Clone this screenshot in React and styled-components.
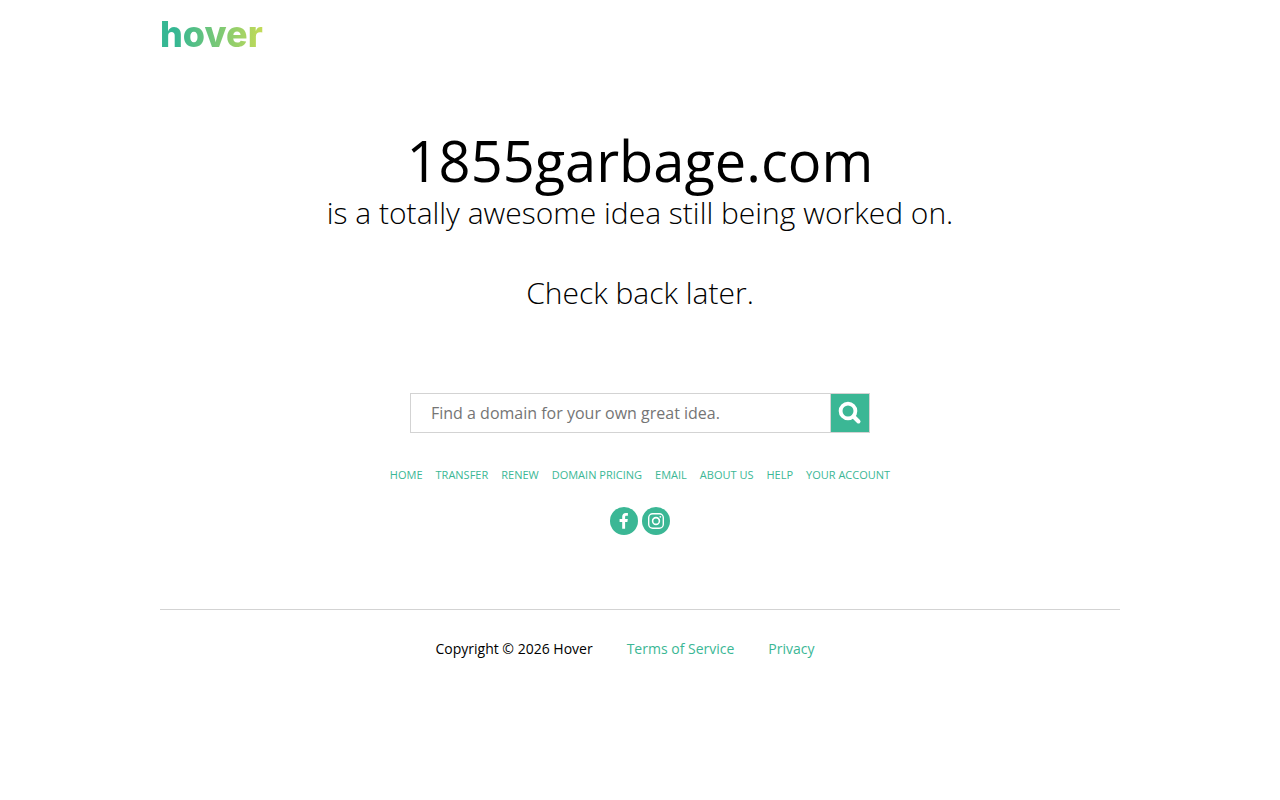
import styled, { createGlobalStyle } from "styled-components";

const GlobalStyle = createGlobalStyle`
  * {
    box-sizing: border-box;
  }

  body {
    margin: 0;
    background: #fff;
    color: #000;
    font-family: "Open Sans", sans-serif;
    font-size: 14px;
  }

  a {
    color: #3bb795;
    text-decoration: none;
  }
`;

const Container = styled.div`
  max-width: 960px;
  margin: 0 auto;
`;

const Header = styled.header`
  display: flex;
  padding-top: 10px;
`;

const Logo = styled.a`
  font-family: Inter, sans-serif;
  font-size: 36px;
  font-weight: 800;
  line-height: 48px;
  color: transparent;
  background: linear-gradient(90deg, #35b793 15%, #c4db57);
  background-clip: text;
`;

const Main = styled.main`
  display: flex;
  flex-direction: column;
  align-items: center;
  padding: 70px 0 74px;
  border-bottom: 1px solid #d3d3d3;
  text-align: center;
`;

const Title = styled.h1`
  margin: 0 0 1px;
  font-size: 56px;
  font-weight: 400;
  line-height: 64px;
`;

const Message = styled.p`
  margin: 0 0 40px;
  font-size: 30px;
  font-weight: 300;
  line-height: 40px;
`;

const SearchForm = styled.form`
  display: flex;
  width: 100%;
  max-width: 460px;
  height: 40px;
  margin: 40px 0 32px;
  border: 1px solid #d3d3d3;
`;

const SearchInput = styled.input`
  flex: 1;
  min-width: 0;
  padding: 0 20px;
  border: 0;
  border-right: 1px solid #d3d3d3;
  font-family: inherit;
  font-size: 16px;

  &::placeholder {
    color: #757575;
  }
`;

const SearchButton = styled.button`
  display: flex;
  align-items: center;
  justify-content: center;
  width: 38px;
  padding: 0;
  border: 0;
  background: #3bb795;
  cursor: pointer;
`;

const Nav = styled.nav`
  display: flex;
  flex-wrap: wrap;
  justify-content: center;
  gap: 0 13px;
  font-size: 11px;
  line-height: 20px;
  text-transform: uppercase;
`;

const Social = styled.div`
  display: flex;
  gap: 4px;
  margin-top: 22px;
`;

const SocialLink = styled.a`
  display: flex;
  width: 28px;
  height: 28px;
  border-radius: 50%;
  background: #3bb795;
`;

const Footer = styled.footer`
  display: flex;
  justify-content: center;
  gap: 34px;
  padding: 29px 30px 29px 0;
  line-height: 20px;
`;

const links = [
  "Home",
  "Transfer",
  "Renew",
  "Domain Pricing",
  "Email",
  "About Us",
  "Help",
  "Your Account",
];

function SearchIcon() {
  return (
    <svg width="24" height="24" viewBox="0 0 24 24" fill="none" stroke="#fff">
      <circle cx="10" cy="10" r="7.4" strokeWidth="3.8" />
      <path d="M15.5 15.5l5 5" strokeWidth="4" strokeLinecap="round" />
    </svg>
  );
}

function FacebookIcon() {
  return (
    <svg width="28" height="28" viewBox="0 0 28 28" fill="#fff">
      <path d="M12.2 21.8v-6.9H9.6v-2.9h2.6V9.8c0-2.5 1.4-3.8 3.6-3.8 1 0 1.9.1 2.1.1v2.6h-1.5c-1.1 0-1.3.6-1.3 1.3V12h2.7l-.4 2.9h-2.3v6.9z" />
    </svg>
  );
}

function InstagramIcon() {
  return (
    <svg width="28" height="28" viewBox="0 0 28 28" fill="none" stroke="#fff">
      <rect x="6.7" y="6.7" width="14.6" height="14.6" rx="4" strokeWidth="1.4" />
      <circle cx="14" cy="14" r="3.4" strokeWidth="1.6" />
      <circle cx="18.3" cy="9.8" r="0.9" fill="#fff" stroke="none" />
    </svg>
  );
}

export default function App() {
  return (
    <>
      <GlobalStyle />
      <Container>
        <Header>
          <Logo href="#">hover</Logo>
        </Header>
        <Main>
          <Title>1855garbage.com</Title>
          <Message>is a totally awesome idea still being worked on.</Message>
          <Message>Check back later.</Message>
          <SearchForm onSubmit={(e) => e.preventDefault()}>
            <SearchInput
              type="text"
              name="query"
              aria-label="Find a domain"
              placeholder="Find a domain for your own great idea."
            />
            <SearchButton type="submit" aria-label="Search">
              <SearchIcon />
            </SearchButton>
          </SearchForm>
          <Nav>
            {links.map((link) => (
              <a href="#" key={link}>
                {link}
              </a>
            ))}
          </Nav>
          <Social>
            <SocialLink href="#" aria-label="Facebook">
              <FacebookIcon />
            </SocialLink>
            <SocialLink href="#" aria-label="Instagram">
              <InstagramIcon />
            </SocialLink>
          </Social>
        </Main>
        <Footer>
          <span>Copyright © 2026 Hover</span>
          <a href="#">Terms of Service</a>
          <a href="#">Privacy</a>
        </Footer>
      </Container>
    </>
  );
}
